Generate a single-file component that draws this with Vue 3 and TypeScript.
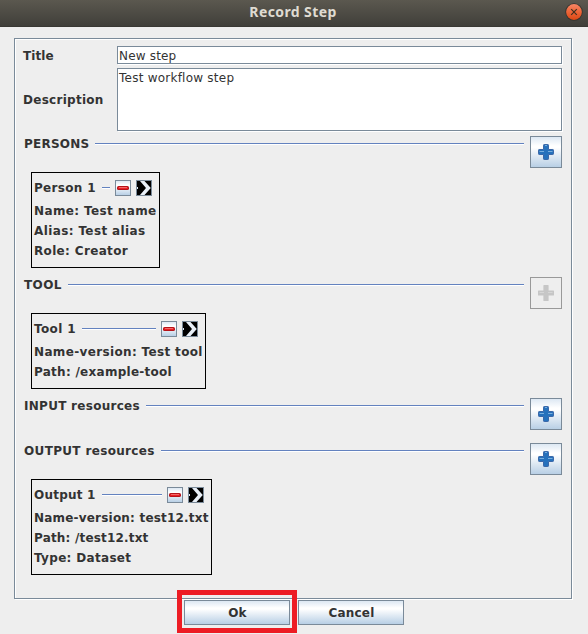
<script setup lang="ts">
import { ref } from 'vue'

interface Label {
  text: string
  spacing: number
}
interface Card {
  title: Label
  width: number
  lines: Label[]
}
interface Section {
  key: string
  label: Label
  height: number
  disabled?: boolean
  card?: Card
}

const title = ref('New step')
const description = ref('Test workflow step')

const sections: Section[] = [
  {
    key: 'persons',
    label: { text: 'PERSONS', spacing: 0.22 },
    height: 141,
    card: {
      title: { text: 'Person 1', spacing: 0.32 },
      width: 129,
      lines: [
        { text: 'Name: Test name', spacing: 0.38 },
        { text: 'Alias: Test alias', spacing: 0.38 },
        { text: 'Role: Creator', spacing: 0.34 },
      ],
    },
  },
  {
    key: 'tool',
    label: { text: 'TOOL', spacing: 0.4 },
    height: 121,
    disabled: true,
    card: {
      title: { text: 'Tool 1', spacing: 0.36 },
      width: 175,
      lines: [
        { text: 'Name-version: Test tool', spacing: 0.35 },
        { text: 'Path: /example-tool', spacing: 0.27 },
      ],
    },
  },
  { key: 'input', label: { text: 'INPUT resources', spacing: 0.28 }, height: 45 },
  {
    key: 'output',
    label: { text: 'OUTPUT resources', spacing: 0.34 },
    height: 155,
    card: {
      title: { text: 'Output 1', spacing: 0.22 },
      width: 181,
      lines: [
        { text: 'Name-version: test12.txt', spacing: 0.2 },
        { text: 'Path: /test12.txt', spacing: 0.18 },
        { text: 'Type: Dataset', spacing: 0.32 },
      ],
    },
  },
]

const tracking = (l: Label) => ({ letterSpacing: l.spacing + 'px' })
</script>

<template>
  <div class="window">
    <header class="titlebar">
      <span class="caption">Record Step</span>
      <svg class="close" width="18" height="18" viewBox="0 0 18 18">
        <defs>
          <linearGradient id="closeFill" x1="0" y1="0" x2="0" y2="1">
            <stop offset="0" stop-color="#f58565" />
            <stop offset="0.5" stop-color="#ed6538" />
            <stop offset="1" stop-color="#dd4814" />
          </linearGradient>
        </defs>
        <circle cx="9" cy="9" r="8.7" fill="#34332e" />
        <circle cx="9" cy="9" r="7.9" fill="url(#closeFill)" />
        <path d="M6.200 6.200l5.600 5.600M11.800 6.200l-5.600 5.600" stroke="#40301f" stroke-width="1.2" />
      </svg>
    </header>

    <main class="panel">
      <div class="field-row title-row">
        <span class="label">Title</span>
        <div class="box">{{ title }}</div>
      </div>
      <div class="field-row desc-row">
        <span class="label wide">Description</span>
        <div class="box area">{{ description }}</div>
      </div>

      <section v-for="s in sections" :key="s.key" class="section" :style="{ height: s.height + 'px' }">
        <div class="section-main">
          <div class="heading">
            <span :style="tracking(s.label)">{{ s.label.text }}</span>
            <i class="rule"></i>
          </div>
          <div v-if="s.card" class="card" :style="{ width: s.card.width + 'px' }">
            <div class="card-head">
              <span :style="tracking(s.card.title)">{{ s.card.title.text }}</span>
              <i class="rule"></i>
              <button class="mini remove">
                <svg width="14" height="14" viewBox="0 0 14 14">
                  <rect x="1" y="5" width="12" height="4" rx="1.6" fill="#b51218" />
                  <rect x="2" y="6" width="10" height="2" rx="0.8" fill="#ea2026" />
                  <rect x="3" y="6" width="8" height="1" fill="#f26a6a" />
                </svg>
              </button>
              <button class="mini">
                <svg width="14" height="14" viewBox="0 0 14 14">
                  <rect width="14" height="14" fill="#000" />
                  <path d="M3 0h4.500l6.300 7-6.300 7H3l6-7z" fill="#e9f0f8" />
                  <rect y="6" width="1" height="2" fill="#dfe9f4" />
                </svg>
              </button>
            </div>
            <div v-for="line in s.card.lines" :key="line.text" class="line" :style="tracking(line)">{{ line.text }}</div>
          </div>
        </div>
        <button class="add" :class="{ off: s.disabled }" :disabled="s.disabled">
          <svg v-if="s.disabled" width="16" height="16" viewBox="0 0 16 16">
            <path d="M6 0h4q.6 0 .6.6V5.400h4.800q.6 0 .6.6v4q0 .6-.6.6h-4.800v4.800q0 .6-.6.6H6q-.6 0-.6-.6v-4.800H.6Q0 10.600 0 10V6q0-.6.6-.6h4.800V.6Q5.400 0 6 0z" fill="#c6c6c6" />
            <path d="M1.500 7.500h4.500M10 7.500h4.500" stroke="#d6d6d6" />
          </svg>
          <svg v-else width="16" height="16" viewBox="0 0 16 16">
            <path d="M6.200.5h3.600q.7 0 .7.7v4.300h4.300q.7 0 .7.7v3.600q0 .7-.7.7h-4.300v4.300q0 .7-.7.7H6.200q-.7 0-.7-.7v-4.300H1.200Q.5 10.500.5 9.800V6.200q0-.7.7-.7h4.300V1.200Q5.500.5 6.200.5z" fill="#2671bc" stroke="#3a67a8" />
            <path d="M1.500 7.500h4.500M10 7.500h4.500M7 1.500h2" stroke="#79aede" />
          </svg>
        </button>
      </section>
    </main>

    <footer class="actions">
      <div class="highlight"><button class="action">Ok</button></div>
      <button class="action cancel">Cancel</button>
    </footer>
  </div>
</template>

<style>
body {
  background: #eeeeee;
}
</style>

<style scoped>
.window {
  width: 588px;
  height: 634px;
  overflow: hidden;
  background: #eeeeee;
  color: #333333;
  font: bold 12px/20px 'DejaVu Sans', sans-serif;
  letter-spacing: 0.22px;
  white-space: nowrap;
}
.window * {
  box-sizing: border-box;
}
button {
  display: flex;
  align-items: center;
  justify-content: center;
  padding: 0;
  margin: 0;
  border: 1px solid #7a8a99;
  border-radius: 0;
  color: inherit;
  font: inherit;
  letter-spacing: inherit;
  background: linear-gradient(#dde8f3 0%, #ffffff 30%, #ffffff 35%, #b8cfe5 100%);
}
.titlebar {
  display: grid;
  grid-template-columns: 1fr auto 1fr;
  align-items: center;
  height: 27px;
  padding: 0 5px 3px 3px;
  background: linear-gradient(#5b584f, #403f3a 96%, #33322e);
  color: #dfdbd2;
}
.caption {
  grid-column: 2;
  font: bold 14px/20px 'Noto Sans', sans-serif;
  letter-spacing: 0.4px;
}
.close {
  justify-self: end;
}
.panel {
  display: flex;
  flex-direction: column;
  width: 558px;
  height: 561px;
  margin: 11px 0 0 14px;
  padding: 7px 9px 0 8px;
  border: 1px solid #7a8a99;
  box-shadow: 1px 1px 0 #ffffff, inset 1px 1px 0 #ffffff;
}
.field-row {
  display: flex;
  align-items: center;
  flex: none;
}
.label {
  width: 94px;
  padding-top: 2px;
  letter-spacing: 0.1px;
}
.label.wide {
  padding-top: 1px;
  letter-spacing: 0.28px;
}
.title-row {
  height: 18px;
  margin-bottom: 4px;
}
.desc-row {
  height: 63px;
  margin-bottom: 5px;
}
.box {
  flex: 1;
  height: 100%;
  padding-left: 1px;
  border: 1px solid #7a8a99;
  background: #ffffff;
  box-shadow: 1px 1px 0 #ffffff;
  font-weight: normal;
  line-height: 18px;
  letter-spacing: 0.18px;
}
.box.area {
  letter-spacing: 0.24px;
}
.section {
  display: flex;
  align-items: flex-start;
  flex: none;
}
.section-main {
  flex: 1;
  padding: 0 6px 0 1px;
}
.heading {
  display: flex;
  align-items: flex-start;
  gap: 6px;
  height: 15px;
  line-height: 16px;
}
.rule {
  flex: 1;
  height: 2px;
  margin-top: 7px;
  background: linear-gradient(#6382bf 50%, #ffffff 50%);
}
.card {
  margin: 21px 0 0 7px;
  padding: 7px 7px 6px 2px;
  border: 1px solid #000000;
}
.card-head {
  display: flex;
  align-items: flex-start;
  height: 16px;
  margin-bottom: 5px;
  line-height: 16px;
}
.card-head .rule {
  margin: 7px 5px 0 6px;
}
.mini {
  width: 16px;
  height: 16px;
}
.mini + .mini {
  margin-left: 5px;
}
.line {
  height: 20px;
}
.add {
  width: 32px;
  height: 32px;
}
.add.off {
  border-color: #999999;
  background: #eeeeee;
}
.actions {
  display: flex;
  align-items: flex-start;
  gap: 1px;
  height: 43px;
  margin: -9px 0 0 177px;
}
.highlight {
  height: 43px;
  padding: 5px 2px 3px;
  border: 5px solid #ed1c24;
}
.action {
  width: 106px;
  height: 25px;
  padding: 1px 0 0 1px;
}
.cancel {
  margin-top: 10px;
}
</style>
